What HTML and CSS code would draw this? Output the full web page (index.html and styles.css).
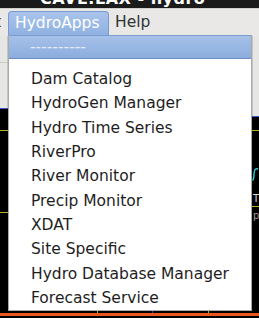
FILE: index.html
```html
<!DOCTYPE html>
<html>
<head>
<meta charset="utf-8">
<link rel="stylesheet" href="styles.css">
</head>
<body>
<div class="screen">
  <div class="titlebar"><span class="title">CAVE.LAX - hydro</span></div>
  <div class="menubar">
    <span class="mb-cut">t</span>
    <span class="mb-item active">HydroApps</span>
    <span class="mb-item">Help</span>
  </div>
  <div class="canvas">
    <div class="col col-left">
      <div class="gray gray-left"><div class="hline"></div></div>
      <div class="line blue"></div>
      <div class="black b21"></div>
      <div class="line yellow"></div>
      <div class="black b81"></div>
      <div class="line yellow"></div>
      <div class="black fill"></div>
    </div>
    <div class="col col-mid"></div>
    <div class="col col-right">
      <div class="gray gray-right"></div>
      <div class="line blue"></div>
      <div class="black b13"></div>
      <div class="line yellow"></div>
      <div class="black b37"></div>
      <svg class="curve" width="7" height="14" viewBox="0 0 7 14"><path d="M6 1 C3 0 2 3 2 6 C2 9 2 11 0.5 12.5" fill="none" stroke="#27d3e6" stroke-width="1.4"/></svg>
      <div class="black b24"><span class="glyph">T</span></div>
      <div class="line yellow"></div>
      <div class="black b30"><span class="glyph small">p</span></div>
      <div class="black fill"></div>
    </div>
  </div>
  <div class="bottom">
    <div class="ticks">
      <span class="tick t-yellow t1"></span>
      <span class="tick t-blue t2"></span>
      <span class="tick t-yellow t3"></span>
    </div>
    <div class="orange"></div>
    <div class="black fill"></div>
  </div>

  <div class="dropdown">
    <div class="dd-sel">----------</div>
    <ul class="dd-list">
      <li>Dam Catalog</li>
      <li>HydroGen Manager</li>
      <li>Hydro Time Series</li>
      <li>RiverPro</li>
      <li>River Monitor</li>
      <li>Precip Monitor</li>
      <li>XDAT</li>
      <li>Site Specific</li>
      <li>Hydro Database Manager</li>
      <li>Forecast Service</li>
    </ul>
  </div>
</div>
</body>
</html>
```
FILE: styles.css
```css
* { box-sizing: border-box; }
html, body { margin: 0; padding: 0; background: #000; }
body { width: 259px; height: 318px; overflow: hidden; font-family: "DejaVu Sans", sans-serif; }

.screen { position: relative; width: 259px; height: 318px; display: flex; flex-direction: column; background: #000; }

.titlebar { height: 8px; background: #1b1b1b; overflow: hidden; padding-left: 40px; }
.title { display: block; color: #fff; font-weight: bold; font-size: 16px; line-height: 16px; margin-top: -9px; letter-spacing: 0.5px; }

.menubar { height: 28px; background: #e9e8e6; border-top: 1px solid #cfcfcd; display: flex; align-items: flex-end; font-size: 15.5px; color: #2e3436; }
.mb-cut { width: 8px; overflow: hidden; text-indent: -5px; line-height: 23px; height: 25px; }
.mb-item { height: 25px; line-height: 23px; padding: 0 7px 0 6px; }
.mb-item.active { width: 101px; background: linear-gradient(#a9c4eb, #8eb0e0); border: 1px solid #7a9acf; border-bottom: none; border-radius: 4px 4px 0 0; color: #fff; padding-top: 0; }

.canvas { height: 275px; display: flex; }
.col { display: flex; flex-direction: column; }
.col-left { width: 8px; }
.col-mid { flex: 1; background: #000; }
.col-right { width: 7px; }

.gray { background: #e6e6e4; }
.gray-left { height: 72px; border-right: 1px solid #c4c4c2; padding-top: 26px; }
.hline { height: 1px; background: #c9c9c7; }
.gray-right { height: 80px; border-left: 1px solid #c4c4c2; }
.line { height: 1px; flex: none; }
.blue { background: #3a56c8; }
.yellow { background: #b5b224; }
.black { background: #000; flex: none; }
.b13 { height: 13px; }
.b21 { height: 21px; }
.b81 { height: 81px; }
.b37 { height: 37px; }
.b24 { height: 24px; }
.b30 { height: 30px; }
.fill { flex: 1; }
.curve { display: block; flex: none; background: #000; }
.glyph { display: block; color: #d8d8d8; font-size: 10px; line-height: 10px; padding-left: 1px; margin-top: 12px; }
.glyph.small { margin-top: 4px; color: #9a9a9a; }

.bottom { height: 7px; display: flex; flex-direction: column; }
.ticks { height: 2px; display: flex; background: #000; }
.tick { width: 1px; height: 2px; }
.t-yellow { background: #b5b224; }
.t-blue { background: #2c3fc4; }
.t1 { margin-left: 97px; }
.t2 { margin-left: 54px; }
.t3 { margin-left: 55px; }
.orange { height: 3px; background: #e9561e; }

.dropdown { position: absolute; left: 8px; top: 35px; width: 244px; height: 276px; background: #fff; border: 1px solid #a9a9a9; border-top: none; font-size: 15.5px; color: #1e1e1e; }
.dd-sel { height: 24px; line-height: 23px; background: linear-gradient(#a6c1e9, #8baddd); border-top: 1px solid #7c9cd0; border-bottom: 1px solid #6c8ec7; padding-left: 21px; color: #e3ebf7; }
.dd-list { list-style: none; margin: 0; padding: 8px 0 0 22px; }
.dd-list li { line-height: 24.33px; height: 24.33px; white-space: nowrap; }
```
